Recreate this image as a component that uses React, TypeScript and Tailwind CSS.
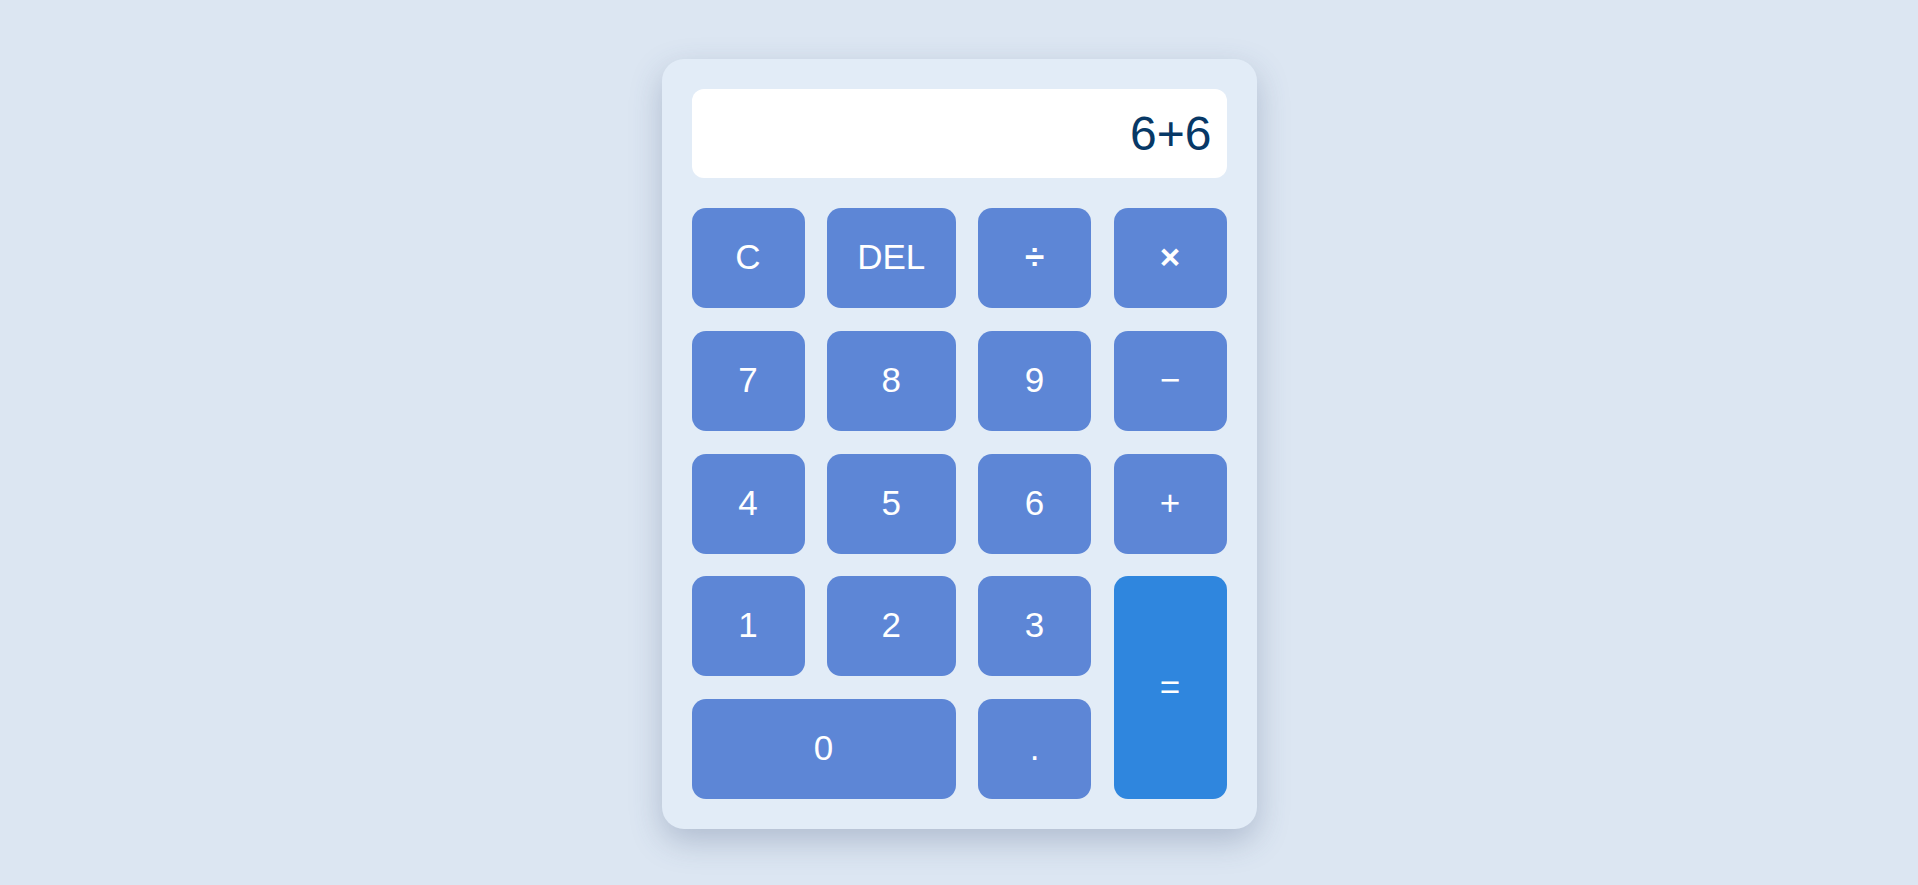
import React from "react";

const btn =
  "flex items-center justify-center rounded-[14px] bg-[#5d86d6] text-white text-[35px] leading-none pb-[3px]";

export default function App() {
  return (
    <div className="min-h-screen w-full bg-[#dce6f2] flex items-start justify-center pt-[59px]" style={{ fontFamily: '"Liberation Sans", Arial, sans-serif' }}>
      <div className="w-[595px] rounded-[22px] bg-[#e2ecf7] p-[30px] shadow-[0_12px_32px_rgba(60,80,120,0.28)] flex flex-col gap-[30px]">
        <div className="h-[89px] rounded-[12px] bg-white flex items-center justify-end pr-[15px] text-[48px] text-[#073866] leading-none">
          6+6
        </div>
        <div className="grid grid-cols-[113px_128.5px_113px_113px] grid-rows-[repeat(5,100px)] gap-x-[22.5px] gap-y-[22.75px]">
          <div className={btn}>C</div>
          <div className={btn}>DEL</div>
          <div className={`${btn} font-bold`}>÷</div>
          <div className={`${btn} font-bold`}>×</div>
          <div className={btn}>7</div>
          <div className={btn}>8</div>
          <div className={btn}>9</div>
          <div className={btn}>−</div>
          <div className={btn}>4</div>
          <div className={btn}>5</div>
          <div className={btn}>6</div>
          <div className={btn}>+</div>
          <div className={btn}>1</div>
          <div className={btn}>2</div>
          <div className={btn}>3</div>
          <div className="row-span-2 flex items-center justify-center rounded-[14px] bg-[#2f86de] text-white text-[35px] leading-none pb-[3px]">=</div>
          <div className={`${btn} col-span-2`}>0</div>
          <div className={btn}>.</div>
        </div>
      </div>
    </div>
  );
}
